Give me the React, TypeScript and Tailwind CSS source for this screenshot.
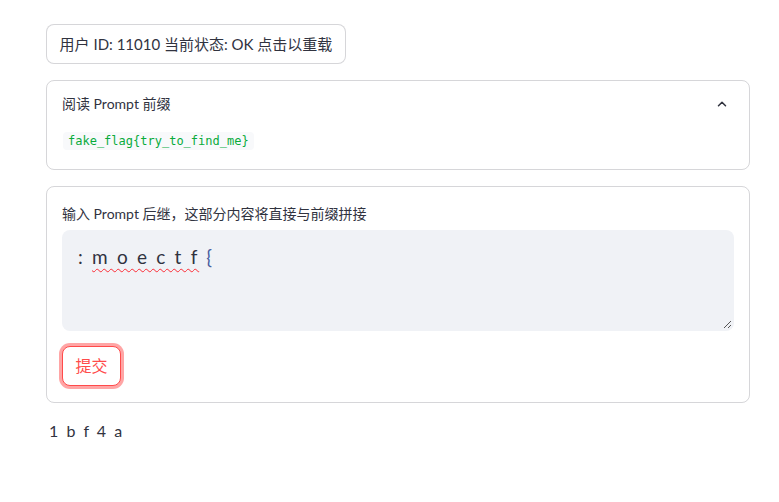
export default function App() {
  return (
    <div
      className="min-h-[502px] w-[779px] bg-white pl-[46px] pt-6 text-[#31333f]"
      style={{ fontFamily: 'Lato, "Noto Sans CJK SC", sans-serif' }}
    >
      <div className="flex w-[704px] flex-col gap-4">
        <button className="flex h-10 w-[300px] items-center justify-center rounded-lg border border-[#31333f]/20 bg-white text-[15px] leading-none">
          用户 ID: 11010 当前状态: OK 点击以重载
        </button>

        <div className="rounded-lg border border-[#31333f]/20">
          <div className="flex items-center justify-between px-[15px] pt-[12px] pb-[6px]">
            <span className="text-[14px]">阅读 Prompt 前缀</span>
            <svg className="mr-[5px]" width="14" height="14" viewBox="0 0 24 24" fill="none" stroke="#31333f" strokeWidth="2.6" strokeLinecap="round" strokeLinejoin="round">
              <path d="M6 15l6-6 6 6" />
            </svg>
          </div>
          <div className="px-4 pb-[18px] pt-[7px]">
            <code
              className="rounded bg-[#f8f9fb] px-[5px] py-[2px] text-[12px] text-[#09ab3b]"
              style={{ fontFamily: '"DejaVu Sans Mono", monospace' }}
            >
              fake_flag{"{"}try_to_find_me{"}"}
            </code>
          </div>
        </div>

        <div className="rounded-lg border border-[#31333f]/20 px-[15px] pb-4 pt-[17px]">
          <div className="mb-[6px] text-[14px] leading-5">输入 Prompt 后继，这部分内容将直接与前缀拼接</div>
          <div className="relative h-[101px] rounded-lg bg-[#f0f2f6] px-4 pt-[13px] text-[19px] tracking-[2.2px]">
            <span>: </span>
            <span className="underline decoration-red-500 decoration-wavy decoration-1 underline-offset-4">m o e c t f</span>
            <span className="text-[#4a5ea0]"> {"{"}</span>
            <svg className="absolute bottom-[2px] right-[2px]" width="9" height="9" viewBox="0 0 9 9" stroke="#555" strokeWidth="1">
              <path d="M8 1L1 8M8 5L5 8" />
            </svg>
          </div>
          <button className="mt-[15px] flex h-10 w-[59px] items-center justify-center rounded-lg border border-[#ff4b4b] bg-white text-[16px] text-[#ff4b4b] shadow-[0_0_0_3px_rgba(255,75,75,0.5)]">
            提交
          </button>
        </div>

        <div className="pl-[3px] text-[16px] tracking-[2px]">1 b f 4 a</div>
      </div>
    </div>
  );
}
